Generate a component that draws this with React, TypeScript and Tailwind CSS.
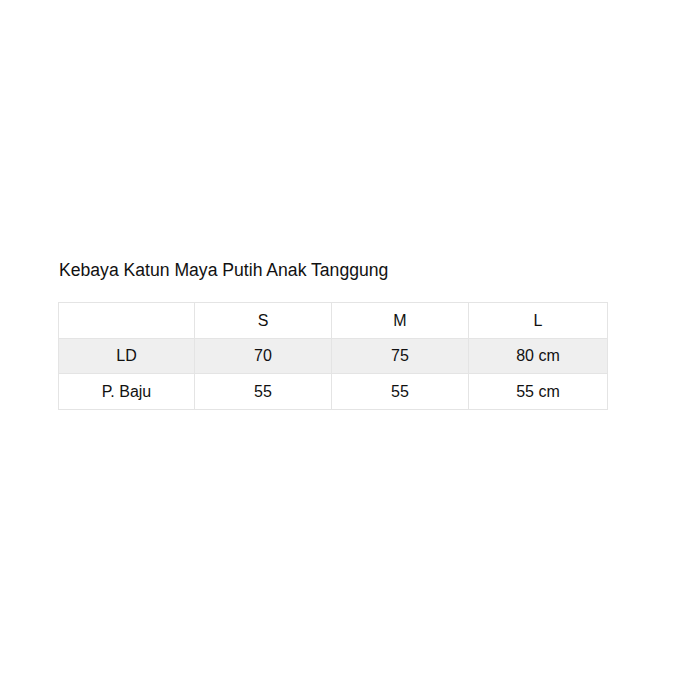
const rows = [
  ["", "S", "M", "L"],
  ["LD", "70", "75", "80 cm"],
  ["P. Baju", "55", "55", "55 cm"],
];

const heights = ["h-[36px]", "h-[35px]", "h-[36px]"];

export default function App() {
  return (
    <div className="h-[700px] w-[700px] bg-white pl-[58px] pt-[259px] font-['Liberation_Sans',Arial,sans-serif] text-[#111]">
      <h1 className="pl-px text-[17.6px] leading-[22px]">Kebaya Katun Maya Putih Anak Tanggung</h1>
      <table className="mt-[21px] w-[549px] table-fixed border-collapse text-[16px]">
        <colgroup>
          <col className="w-[136px]" />
          <col className="w-[137px]" />
          <col className="w-[137px]" />
          <col className="w-[139px]" />
        </colgroup>
        <tbody>
          {rows.map((row, i) => (
            <tr key={i} className={i === 1 ? "bg-[#efefef]" : "bg-white"}>
              {row.map((cell, j) => (
                <td
                  key={j}
                  className={`${heights[i]} border border-[#e4e4e4] p-0 text-center align-middle`}
                >
                  {cell}
                </td>
              ))}
            </tr>
          ))}
        </tbody>
      </table>
    </div>
  );
}
